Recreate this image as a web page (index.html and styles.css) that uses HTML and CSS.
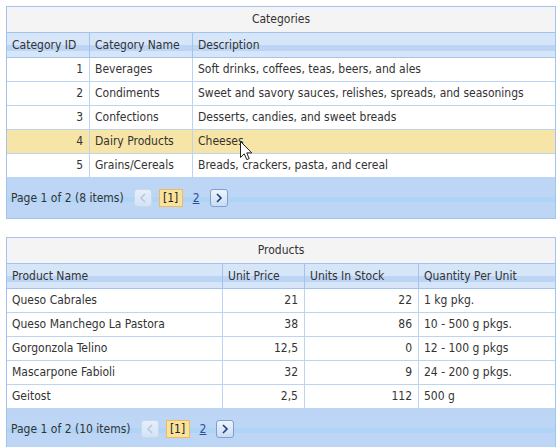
FILE: index.html
```html
<!DOCTYPE html>
<html>
<head>
<meta charset="utf-8">
<link rel="stylesheet" href="styles.css">
</head>
<body>
<div class="page">
  <div class="grid">
    <div class="title">Categories</div>
    <div class="row head cat">
      <div class="cell">Category ID</div>
      <div class="cell">Category Name</div>
      <div class="cell">Description</div>
    </div>
    <div class="row cat">
      <div class="cell num">1</div>
      <div class="cell">Beverages</div>
      <div class="cell">Soft drinks, coffees, teas, beers, and ales</div>
    </div>
    <div class="row cat">
      <div class="cell num">2</div>
      <div class="cell">Condiments</div>
      <div class="cell">Sweet and savory sauces, relishes, spreads, and seasonings</div>
    </div>
    <div class="row cat">
      <div class="cell num">3</div>
      <div class="cell">Confections</div>
      <div class="cell">Desserts, candies, and sweet breads</div>
    </div>
    <div class="row cat sel">
      <div class="cell num">4</div>
      <div class="cell">Dairy Products</div>
      <div class="cell">Cheeses</div>
    </div>
    <div class="row cat">
      <div class="cell num">5</div>
      <div class="cell">Grains/Cereals</div>
      <div class="cell">Breads, crackers, pasta, and cereal</div>
    </div>
    <div class="pager">
      <span class="ptext">Page 1 of 2 (8 items)</span>
      <span class="pbtn prev"><svg width="8" height="10" viewBox="0 0 8 10"><polyline points="6,1 2,5 6,9" fill="none" stroke="#b9c6d6" stroke-width="1.5"/></svg></span>
      <span class="cur">[1]</span>
      <a class="plink" href="#">2</a>
      <span class="pbtn next"><svg width="8" height="10" viewBox="0 0 8 10"><polyline points="2,1 6,5 2,9" fill="none" stroke="#1f3b78" stroke-width="1.6"/></svg></span>
    </div>
  </div>

  <div class="grid">
    <div class="title">Products</div>
    <div class="row head prod">
      <div class="cell">Product Name</div>
      <div class="cell">Unit Price</div>
      <div class="cell">Units In Stock</div>
      <div class="cell">Quantity Per Unit</div>
    </div>
    <div class="row prod">
      <div class="cell">Queso Cabrales</div>
      <div class="cell num">21</div>
      <div class="cell num">22</div>
      <div class="cell">1 kg pkg.</div>
    </div>
    <div class="row prod">
      <div class="cell">Queso Manchego La Pastora</div>
      <div class="cell num">38</div>
      <div class="cell num">86</div>
      <div class="cell">10 - 500 g pkgs.</div>
    </div>
    <div class="row prod">
      <div class="cell">Gorgonzola Telino</div>
      <div class="cell num">12,5</div>
      <div class="cell num">0</div>
      <div class="cell">12 - 100 g pkgs</div>
    </div>
    <div class="row prod">
      <div class="cell">Mascarpone Fabioli</div>
      <div class="cell num">32</div>
      <div class="cell num">9</div>
      <div class="cell">24 - 200 g pkgs.</div>
    </div>
    <div class="row prod">
      <div class="cell">Geitost</div>
      <div class="cell num">2,5</div>
      <div class="cell num">112</div>
      <div class="cell">500 g</div>
    </div>
    <div class="pager">
      <span class="ptext">Page 1 of 2 (10 items)</span>
      <span class="pbtn prev"><svg width="8" height="10" viewBox="0 0 8 10"><polyline points="6,1 2,5 6,9" fill="none" stroke="#b9c6d6" stroke-width="1.5"/></svg></span>
      <span class="cur">[1]</span>
      <a class="plink" href="#">2</a>
      <span class="pbtn next"><svg width="8" height="10" viewBox="0 0 8 10"><polyline points="2,1 6,5 2,9" fill="none" stroke="#1f3b78" stroke-width="1.6"/></svg></span>
    </div>
  </div>

  <svg class="cursor" width="13" height="20" viewBox="0 0 13 20"><path d="M0.5,0.5 L0.5,16.5 L4.2,12.8 L6.8,18.6 L9.2,17.6 L6.7,11.9 L11.8,11.9 Z" fill="#fff" stroke="#222" stroke-width="1" stroke-linejoin="round"/></svg>
</div>
</body>
</html>
```

FILE: styles.css
```css
body {
  margin: 0;
  background: #fff;
  font-family: "DejaVu Sans Condensed", "DejaVu Sans", sans-serif;
  font-stretch: condensed;
  font-size: 12px;
  color: #333;
}

.page {
  position: relative;
  padding: 6px 0 0 6px;
  width: 550px;
}

.grid {
  width: 550px;
  box-sizing: border-box;
  border: 1px solid #a3c3ec;
}

.grid + .grid {
  margin-top: 18px;
}

.title {
  height: 26px;
  box-sizing: border-box;
  line-height: 25px;
  text-align: center;
  background: #f4f4f4;
  border-bottom: 1px solid #a3c3ec;
}

.row {
  display: grid;
  height: 24px;
  box-sizing: border-box;
  border-bottom: 1px solid #bcd3f1;
}

.cat {
  grid-template-columns: 82px 103px 1fr;
}

.prod {
  grid-template-columns: 215px 82px 114px 1fr;
}

.head {
  height: 25px;
  border-bottom-color: #a3c3ec;
  background: linear-gradient(#d6e6f8 0, #d6e6f8 12px, #bcd5f5 12px, #bcd5f5 18px, #d6e6f8 18px);
}

.cell {
  padding: 0 5px;
  line-height: 23px;
  white-space: nowrap;
  overflow: hidden;
  border-left: 1px solid #bcd3f1;
}

.head .cell {
  line-height: 24px;
  border-left-color: #a3c3ec;
}

.cell:first-child {
  border-left: 0;
}

.num {
  text-align: right;
  padding-right: 6px;
}

.sel {
  background: #f6e5a6;
}

.pager {
  height: 40px;
  display: flex;
  align-items: center;
  padding-left: 4px;
  background: linear-gradient(#bed6f5 0, #bed6f5 19px, #afd4f6 19px, #afd4f6 24px, #bed6f5 24px);
}

.ptext {
  margin-right: 10px;
}

.pbtn {
  width: 18px;
  height: 18px;
  box-sizing: border-box;
  border-radius: 3px;
  border: 1px solid;
  display: flex;
  align-items: center;
  justify-content: center;
}

.prev {
  border-color: #c7d9ee;
  background: linear-gradient(#e6eff9, #d3e3f5);
}

.next {
  border-color: #7f9fcc;
  background: linear-gradient(#eef4fc, #c9dcf4);
}

.cur {
  margin-left: 7px;
  width: 24px;
  height: 18px;
  box-sizing: border-box;
  border: 1px solid #eabc5f;
  background: #fae29c;
  color: #222;
  text-align: center;
  line-height: 16px;
}

.plink {
  margin: 0 10px 0 10px;
  color: #2a4d96;
  text-decoration: underline;
}

.cursor {
  position: absolute;
  left: 240px;
  top: 141px;
}
```
